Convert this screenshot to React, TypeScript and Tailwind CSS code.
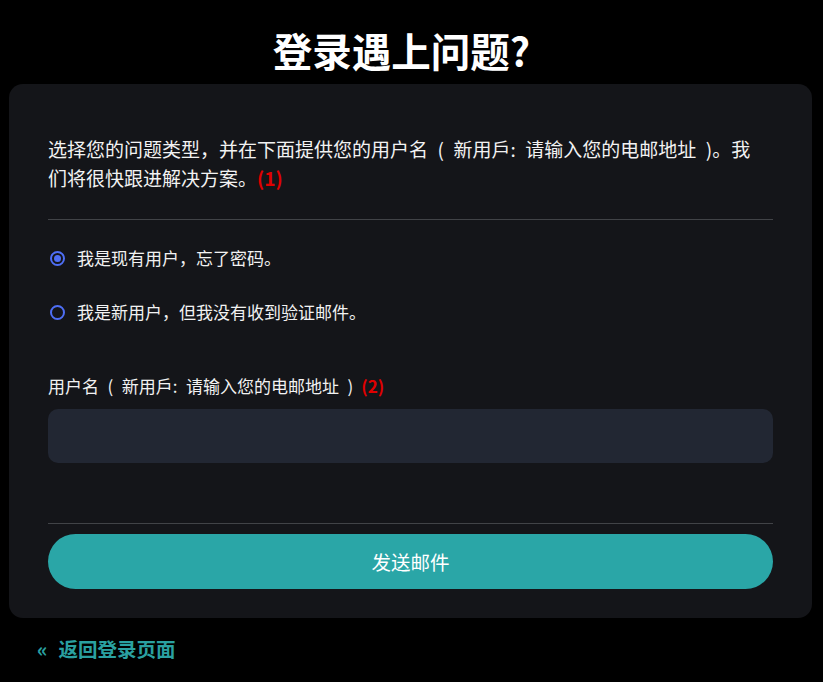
export default function App() {
  return (
    <div className="min-h-screen w-[823px] bg-black font-['Noto_Sans_CJK_SC','Noto_Sans',sans-serif] text-[#f2f2f2]">
      <h1 className="pr-[20px] pt-[28px] text-center text-[39.5px] font-bold leading-[44px] text-white">登录遇上问题?</h1>

      <div className="ml-[9px] mt-[12px] w-[803px] rounded-[14px] bg-[#141519] px-[39px] pb-[29px] pt-[50px]">
        <p className="pr-[10px] text-[19px] leading-[29px]">
          选择您的问题类型，并在下面提供您的用户名{"\u2002(\u2002"}新用戶:{"\u2002"}请输入您的电邮地址{"\u2002)"}。我们将很快跟进解决方案。
          <span className="font-bold text-[#e00000]">(1)</span>
        </p>

        <div className="mt-[27px] h-px bg-[#414347]" />

        <div className="mt-[26px] flex flex-col gap-[30px]">
          <label className="flex h-[24px] items-center gap-[12px] text-[17px]">
            <span className="ml-[2px] flex h-[15px] w-[15px] items-center justify-center rounded-full border-2 border-[#4e6ef4]">
              <span className="h-[7px] w-[7px] rounded-full bg-[#4e6ef4]" />
            </span>
            我是现有用户，忘了密码。
          </label>
          <label className="flex h-[24px] items-center gap-[12px] text-[17px]">
            <span className="ml-[2px] h-[15px] w-[15px] rounded-full border-2 border-[#4e6ef4]" />
            我是新用户，但我没有收到验证邮件。
          </label>
        </div>

        <div className="mt-[50px] text-[17px] leading-[24px]">
          用户名{"\u2002(\u2002"}新用戶:{"\u2002"}请输入您的电邮地址{"\u2002)"}
          <span className="ml-[8px] font-bold text-[#e00000]">(2)</span>
        </div>
        <input className="mt-[11px] block h-[54px] w-full rounded-[10px] bg-[#222733] px-4 text-[17px] outline-none" />

        <div className="mt-[60px] h-px bg-[#414347]" />

        <button className="mt-[10px] h-[55px] w-full rounded-full bg-[#2aa6a7] text-[19.5px] text-white">发送邮件</button>
      </div>

      <a className="mt-[19px] flex items-center gap-[11px] pl-[37px] text-[19.5px] font-bold leading-[24px] text-[#2aa0a1]">
        <span className="text-[20px]">«</span>
        返回登录页面
      </a>
    </div>
  );
}
